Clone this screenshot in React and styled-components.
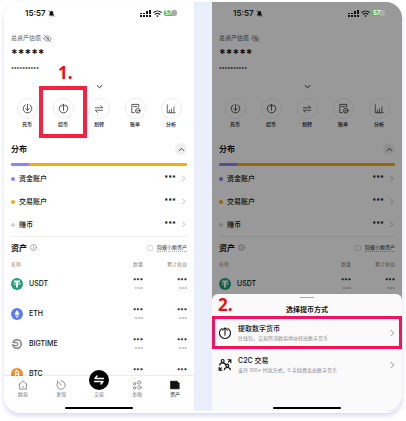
import React from "react";
import styled, { createGlobalStyle } from "styled-components";

const Global = createGlobalStyle`
  * { box-sizing: border-box; }
  body {
    margin: 0;
    background: #fff;
    color: #111;
    font-family: Inter, "Noto Sans CJK SC", sans-serif;
    -webkit-text-size-adjust: none;
  }
  button {
    border: 0;
    padding: 0;
    margin: 0;
    background: none;
    color: inherit;
    font: inherit;
    cursor: pointer;
  }
  h2, p { margin: 0; font-weight: inherit; }
  svg { display: block; flex: none; }
`;

const Card = styled.main`
  margin: 2px 4px 8px;
  display: grid;
  grid-template-columns: minmax(0, 1fr) minmax(0, 1fr);
  column-gap: 18px;
  background: #ebeffc;
  border-bottom: 2px solid #fff;
  border-radius: 16px;
  overflow: hidden;
  box-shadow: 0 3px 5px #dcd9f6;
`;

const Screen = styled.section`
  position: relative;
  background: #fff;
  display: flex;
  flex-direction: column;
`;

const StatusBar = styled.header`
  position: relative;
  z-index: 3;
  height: 22px;
  padding: 0 17px 0 21px;
  display: flex;
  align-items: center;
  justify-content: space-between;
`;

const Group = styled.div`
  display: flex;
  align-items: center;
  gap: ${(p) => p.$gap || 2}px;
`;

const Clock = styled.time`
  font-size: 8px;
  line-height: 10px;
  font-weight: 600;
`;

const Battery = styled.span`
  height: 6px;
  width: 13px;
  padding-left: 1px;
  border-radius: 2px;
  background: linear-gradient(90deg, #35c95a 60%, #a9adab 60%);
  color: #fff;
  font-size: 6px;
  line-height: 6px;
  font-weight: 700;
`;

const Content = styled.div`
  padding: 0 7px;
`;

const BalanceLabel = styled.div`
  margin-top: 10px;
  height: 8px;
  display: flex;
  align-items: center;
  gap: 2px;
  color: #555;
  font-size: 6px;
  line-height: 8px;
`;

const Balance = styled.p`
  margin-top: 4px;
  height: 10px;
  font-size: 12px;
  line-height: 16px;
  font-weight: 700;
`;

const BalanceSub = styled.p`
  margin-top: 8px;
  height: 8px;
  font-size: 5px;
  line-height: 10px;
  font-weight: 700;
`;

const Expand = styled.button`
  margin-top: 10px;
  height: 8px;
  display: grid;
  place-items: center;
  align-self: center;
`;

const Actions = styled.nav`
  margin-top: 8px;
  padding: 0 5px;
  display: grid;
  grid-template-columns: repeat(5, 1fr);
`;

const Action = styled.button`
  position: relative;
  display: flex;
  flex-direction: column;
  align-items: center;
  gap: 2px;
  font-size: 5px;
  line-height: 6px;
  font-weight: 500;
`;

const Ring = styled.span`
  width: 21px;
  height: 21px;
  border: 1px solid #00000012;
  border-radius: 50%;
  color: #333;
  display: grid;
  place-items: center;
`;

const StepFrame = styled.span`
  position: absolute;
  inset: -12px -6px -11px;
  border: 4px solid #f9213f;
`;

const StepNumber = styled.span`
  position: absolute;
  left: ${(p) => p.$left}px;
  top: ${(p) => p.$top}px;
  color: #ee0c12;
  font-family: "Open Sans", "Noto Sans", sans-serif;
  font-size: 17px;
  line-height: 16px;
  font-weight: 700;
`;

const SectionHead = styled.div`
  margin-top: ${(p) => p.$top || 0}px;
  height: ${(p) => p.$height}px;
  display: flex;
  align-items: center;
  justify-content: space-between;
`;

const SectionTitle = styled.h2`
  font-size: 8px;
  line-height: 12px;
  font-weight: 600;
`;

const Collapse = styled.button`
  width: 12px;
  height: 12px;
  border-radius: 50%;
  background: #00000010;
  display: grid;
  place-items: center;
`;

const Distribution = styled.div`
  margin-top: 7px;
  height: 3px;
  border-radius: 1px;
  background: linear-gradient(90deg, #8686f5 10%, #fbab0c 10%);
`;

const Accounts = styled.div`
  margin-top: 1px;
  border-bottom: 1px solid #00000010;
`;

const Account = styled.button`
  width: 100%;
  height: 23px;
  display: flex;
  align-items: center;
  font-size: 7px;
  line-height: 10px;
  font-weight: 500;
`;

const Dot = styled.i`
  width: 4px;
  height: 4px;
  margin-right: 4px;
  border-radius: 50%;
  background: ${(p) => p.$color};
`;

const AccountValue = styled.span`
  margin-left: auto;
  margin-right: 4px;
  font-size: 7px;
  line-height: 10px;
  font-weight: 700;
`;

const HideSmall = styled.label`
  display: flex;
  align-items: center;
  gap: 4px;
  font-size: 5px;
  line-height: 7px;
  color: #333;
  span { border-bottom: 1px dotted #aaa; }
  input {
    appearance: none;
    width: 6px;
    height: 6px;
    margin: 0;
    border: 1px solid #00000022;
    border-radius: 1px;
  }
  input:checked { background: #111; }
`;

const AssetTable = styled.table`
  width: 100%;
  table-layout: fixed;
  border-collapse: collapse;
  th, td { padding: 0; text-align: right; vertical-align: middle; }
  th:first-child, td:first-child { text-align: left; width: 50%; }
`;

const HeadRow = styled.tr`
  height: 11px;
  color: #8b8b8b;
  font-size: 5px;
  line-height: 8px;
  th { font-weight: 400; }
`;

const AssetRow = styled.tr`
  height: 30px;
`;

const Coin = styled.span`
  display: flex;
  align-items: center;
  gap: 6px;
  font-size: 7px;
  line-height: 10px;
  font-weight: 500;
`;

const Masked = styled.span`
  display: block;
  height: ${(p) => (p.$sub ? 7 : 8)}px;
  font-size: ${(p) => (p.$sub ? 5 : 6)}px;
  line-height: 8px;
  font-weight: 700;
  color: ${(p) => (p.$sub ? "#999" : "#111")};
`;

const TabBar = styled.nav`
  position: relative;
  margin-top: -13px;
  height: 35px;
  padding-top: 4px;
  background: #fff;
  box-shadow: 0 -1px 1px #00000014;
  display: grid;
  grid-template-columns: repeat(5, 1fr);
  align-items: start;
`;

const Tab = styled.button`
  display: flex;
  flex-direction: column;
  align-items: center;
  justify-content: flex-end;
  gap: 1px;
  height: 18px;
  color: ${(p) => (p.$active ? "#111" : "#7d7d7d")};
  font-size: 5px;
  line-height: 7px;
`;

const TradeDisc = styled.span`
  width: 20px;
  height: 20px;
  flex: none;
  border-radius: 50%;
  background: #000;
  color: #fff;
  display: grid;
  place-items: center;
`;

const HomeBar = styled.i`
  position: absolute;
  left: 50%;
  bottom: 2px;
  width: 68px;
  height: 2px;
  margin-left: -34px;
  border-radius: 1px;
  background: #000;
`;

const Scrim = styled.div`
  position: absolute;
  inset: 0;
  z-index: 2;
  background: rgba(0, 0, 0, 0.4);
`;

const Sheet = styled.div`
  position: absolute;
  z-index: 4;
  left: 0;
  right: 0;
  bottom: 0;
  height: 117px;
  padding-top: 3px;
  border-radius: 6px 6px 0 0;
  background: #fafafa;
`;

const Grip = styled.i`
  display: block;
  width: 14px;
  height: 1px;
  margin: 0 auto;
  background: #aaa;
`;

const SheetTitle = styled.h2`
  margin: 6px 0 1px;
  text-align: center;
  font-size: 7px;
  line-height: 11px;
  font-weight: 600;
`;

const Option = styled.button`
  width: 100%;
  height: ${(p) => (p.$selected ? 33 : 30)}px;
  padding: 1px ${(p) => (p.$selected ? 3 : 6)}px 0;
  border: ${(p) => (p.$selected ? "3px solid #f3125f" : "0")};
  display: flex;
  align-items: center;
  gap: 6px;
  text-align: left;
`;

const OptionText = styled.span`
  flex: 1;
  display: flex;
  flex-direction: column;
  white-space: nowrap;
  strong { font-size: 7px; line-height: 10px; font-weight: 500; }
  small { font-size: 5px; line-height: 8px; color: #8a8a8a; }
`;

const Icon = ({ size = 10, w = 1.5, children, ...rest }) => (
  <svg width={size} height={size} viewBox="0 0 24 24" fill="none" stroke="currentColor"
    strokeWidth={w} strokeLinecap="round" strokeLinejoin="round" aria-hidden="true" {...rest}>
    {children}
  </svg>
);

const CHEVRONS = { right: "M9 4l8 8-8 8", down: "M4 9l8 7 8-7", up: "M4 16l8-8 8 8" };

const Chevron = ({ dir, size = 7, w = 2.5, ...rest }) => (
  <Icon size={size} w={w} {...rest}><path d={CHEVRONS[dir]} /></Icon>
);

const Deposit = () => (
  <Icon size={11} w={1.8}><path d="M7 4a9.500 9.500 0 1 0 10 0M12 3v13M8 12l4 4 4-4" /></Icon>
);
const Withdraw = ({ size = 11 }) => (
  <Icon size={size} w={1.8}><path d="M7 4a9.500 9.500 0 1 0 10 0M12 16V3M8 7l4-4 4 4" /></Icon>
);
const Transfer = () => (
  <Icon size={10} w={1.8}><path d="M3 9h18l-5-5M21 15H3l5 5" /></Icon>
);
const Bill = () => (
  <Icon size={11} w={1.8}>
    <path d="M9 21H4V3h15v6M8 8h7" /><circle cx="17" cy="17" r="5" /><path d="M15 17l2 1 2-2" />
  </Icon>
);
const Chart = () => (
  <Icon size={10} w={1.8}><path d="M3 2v19h19M8 21v-6M13 21v-9M19 21V7" /></Icon>
);

const ACTIONS = [
  ["充币", Deposit],
  ["提币", Withdraw],
  ["划转", Transfer],
  ["账单", Bill],
  ["分析", Chart],
];

const ACCOUNTS = [
  ["资金账户", "#8686f5"],
  ["交易账户", "#fbab0c"],
  ["赚币", "#d4d4d4"],
];

const COINS = {
  USDT: (
    <Icon size={12} stroke="none">
      <circle cx="12" cy="12" r="12" fill="#229f7a" />
      <path d="M6 5h12v3.500h-4V19h-4V8.500H6z" fill="#fff" />
      <ellipse cx="12" cy="11.500" rx="7" ry="2" stroke="#fff" strokeWidth="1.2" />
    </Icon>
  ),
  ETH: (
    <Icon size={12} stroke="none">
      <circle cx="12" cy="12" r="12" fill="#5b7df0" />
      <path d="M12 4l5 8-5 3-5-3zM7.500 14l4.500 3 4.500-3-4.500 6z" fill="#fff" />
    </Icon>
  ),
  BIGTIME: (
    <Icon size={12} stroke="#999">
      <circle cx="12" cy="12" r="8.500" strokeWidth="4" strokeDasharray="50 4" strokeDashoffset="24" strokeLinecap="butt" />
      <path d="M4 9h7a3 3 0 0 1 0 6H6" stroke="#888" strokeWidth="2.500" />
    </Icon>
  ),
  BTC: (
    <Icon size={12} stroke="none">
      <circle cx="12" cy="12" r="12" fill="#f28c2c" />
      <path d="M9 6v12M9 6.500h4a2.600 2.600 0 0 1 0 5.300H9M13 11.800a3 3 0 0 1 0 5.900H7.500M11 4v2M11 18v2"
        stroke="#fff" strokeWidth="2.400" />
    </Icon>
  ),
};

const Status = () => (
  <StatusBar>
    <Group $gap={2}>
      <Clock>15:57</Clock>
      <Icon size={7} w={2} fill="currentColor">
        <path d="M5 17c2-2 2-5 2-8a5 5 0 0 1 10 0c0 3 0 6 2 8zM10 20h4M3 3l18 19" />
      </Icon>
    </Group>
    <Group $gap={2}>
      <svg width="11" height="7" viewBox="0 0 11 7" fill="currentColor" aria-hidden="true">
        <path d="M0 3h2v1H0zM3 3h2v1H3zM6 1h2v3H6zM9 0h2v4H9zM0 5h2v2H0zM3 5h2v2H3zM6 5h2v2H6zM9 5h2v2H9z" />
      </svg>
      <Icon size={9} w={3}>
        <path d="M2 9a15 15 0 0 1 20 0M6 14a9 9 0 0 1 12 0M11 18.500l1 1 1-1" />
      </Icon>
      <Battery>57</Battery>
    </Group>
  </StatusBar>
);

const Tabs = () => (
  <TabBar>
    <Tab>
      <Icon w={2}><path d="M2 11L12 2l10 9M4 10v12h16V10M12 15v3" /></Icon>
      欧易
    </Tab>
    <Tab>
      <Icon w={2}><path d="M12 2a10 10 0 1 1-8 4M12 12L7 6M4 2v4" /></Icon>
      发现
    </Tab>
    <Tab>
      <TradeDisc>
        <Icon size={12} w={3}><path d="M21 9H4l4-5M3 15h17l-4 5" /></Icon>
      </TradeDisc>
      交易
    </Tab>
    <Tab>
      <Icon w={2}>
        <circle cx="17" cy="6" r="4" /><circle cx="6" cy="9" r="3" />
        <circle cx="6" cy="19" r="3" /><circle cx="18" cy="18" r="4" />
      </Icon>
      金融
    </Tab>
    <Tab $active>
      <Icon w={2} fill="currentColor">
        <path d="M2 3h16v4h4v4h-4v5h4v5H2z" /><path d="M18 12h4v3h-4z" />
      </Icon>
      资产
    </Tab>
    <HomeBar />
  </TabBar>
);

const Wallet = ({ stepOne, coins }) => (
  <>
    <Status />
    <Content>
      <BalanceLabel>
        总资产估值
        <Icon size={9} w={1.5}>
          <path d="M2 12s4-7 10-7 10 7 10 7-4 7-10 7S2 12 2 12zM3 3l18 18" />
          <circle cx="12" cy="12" r="3" />
        </Icon>
      </BalanceLabel>
      <Balance>*****</Balance>
      <BalanceSub>**********</BalanceSub>
    </Content>
    <Expand aria-label="展开"><Chevron dir="down" w={3} /></Expand>
    <Actions>
      {ACTIONS.map(([label, Glyph], i) => (
        <Action key={label}>
          <Ring><Glyph /></Ring>
          {label}
          {stepOne && i === 1 && (
            <>
              <StepFrame />
              <StepNumber $left={13} $top={-33}>1.</StepNumber>
            </>
          )}
        </Action>
      ))}
    </Actions>
    <Content>
      <SectionHead $top={15} $height={14}>
        <SectionTitle>分布</SectionTitle>
        <Collapse aria-label="收起"><Chevron dir="up" /></Collapse>
      </SectionHead>
      <Distribution />
      <Accounts>
        {ACCOUNTS.map(([label, color]) => (
          <Account key={label}>
            <Dot $color={color} />
            {label}
            <AccountValue>***</AccountValue>
            <Chevron dir="right" w={2} stroke="#888" />
          </Account>
        ))}
      </Accounts>
      <SectionHead $height={21}>
        <Group $gap={3}>
          <SectionTitle>资产</SectionTitle>
          <Icon size={7} w={2} stroke="#777">
            <circle cx="12" cy="12" r="10" /><path d="M12 11v6M12 7v.5" />
          </Icon>
        </Group>
        <HideSmall><input type="checkbox" /><span>隐藏小额资产</span></HideSmall>
      </SectionHead>
      <AssetTable>
        <thead>
          <HeadRow><th>名称</th><th>数量</th><th>累计收益</th></HeadRow>
        </thead>
        <tbody>
          {coins.map((name) => (
            <AssetRow key={name}>
              <td><Coin>{COINS[name]}{name}</Coin></td>
              <td><Masked>***</Masked><Masked $sub>***</Masked></td>
              <td><Masked>***</Masked><Masked $sub>***</Masked></td>
            </AssetRow>
          ))}
        </tbody>
      </AssetTable>
    </Content>
  </>
);

export default function App() {
  return (
    <>
      <Global />
      <Card>
        <Screen>
          <Wallet stepOne coins={["USDT", "ETH", "BIGTIME", "BTC"]} />
          <Tabs />
        </Screen>
        <Screen>
          <Wallet coins={["USDT"]} />
          <Scrim />
          <Sheet role="dialog" aria-label="选择提币方式">
            <Grip />
            <StepNumber $left={6} $top={3}>2.</StepNumber>
            <SheetTitle>选择提币方式</SheetTitle>
            <Option $selected>
              <Withdraw size={14} />
              <OptionText>
                <strong>提取数字货币</strong>
                <small>往钱包、交易所或欧易地址转出数字货币</small>
              </OptionText>
              <Chevron dir="right" size={8} w={2} stroke="#666" />
            </Option>
            <Option>
              <Icon size={14} w={2}>
                <circle cx="8" cy="5" r="2.500" /><path d="M3 12c0-5 10-5 10 0" />
                <circle cx="16" cy="13" r="2.500" /><path d="M11 20c0-5 10-5 10 0" />
                <path d="M17 3h5v5M22 3l-4 4M2 16v5h5M2 21l4-4" />
              </Icon>
              <OptionText>
                <strong>C2C 交易</strong>
                <small>支持 100+ 付款方式，0 手续费卖出数字货币</small>
              </OptionText>
              <Chevron dir="right" size={8} w={2} stroke="#666" />
            </Option>
            <HomeBar />
          </Sheet>
        </Screen>
      </Card>
    </>
  );
}
